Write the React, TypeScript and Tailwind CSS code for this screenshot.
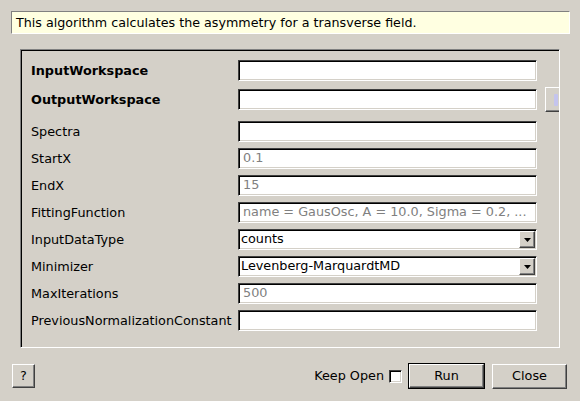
type Row = {
  label: string;
  bold?: boolean;
  kind: "text" | "combo";
  value?: string;
  placeholder?: string;
  browse?: boolean;
  h: number;
  mt: number;
};

const rows: Row[] = [
  { label: "InputWorkspace", bold: true, kind: "text", h: 21, mt: 0 },
  { label: "OutputWorkspace", bold: true, kind: "text", browse: true, h: 25, mt: 6 },
  { label: "Spectra", kind: "text", h: 21, mt: 9 },
  { label: "StartX", kind: "text", placeholder: "0.1", h: 21, mt: 6 },
  { label: "EndX", kind: "text", placeholder: "15", h: 21, mt: 6 },
  {
    label: "FittingFunction",
    kind: "text",
    placeholder: "name = GausOsc, A = 10.0, Sigma = 0.2, ...",
    h: 21,
    mt: 6,
  },
  { label: "InputDataType", kind: "combo", value: "counts", h: 21, mt: 6 },
  { label: "Minimizer", kind: "combo", value: "Levenberg-MarquardtMD", h: 21, mt: 6 },
  { label: "MaxIterations", kind: "text", placeholder: "500", h: 21, mt: 6 },
  { label: "PreviousNormalizationConstant", kind: "text", h: 21, mt: 6 },
];

const sunken =
  "border border-t-[#404040] border-l-[#404040] border-b-white border-r-white shadow-[inset_1px_1px_0_#000,inset_-1px_-1px_0_#d4d0c8]";
const raised =
  "border border-t-white border-l-white border-b-[#404040] border-r-[#404040] shadow-[inset_-1px_-1px_0_#808080]";

function Field({ row }: { row: Row }) {
  if (row.kind === "combo") {
    return (
      <div className={`w-[299px] h-[21px] shrink-0 bg-white flex items-center ${sunken}`}>
        <span className="pl-[2px] flex-1 text-black leading-none">{row.value}</span>
        <div
          className={`w-[16px] h-[17px] mr-[1px] bg-[#d4d0c8] flex items-center justify-center ${raised}`}
        >
          <svg width="7" height="4" viewBox="0 0 7 4">
            <path d="M0 0h7L3.5 4z" fill="#000" />
          </svg>
        </div>
      </div>
    );
  }
  return (
    <div className={`w-[299px] h-[21px] shrink-0 bg-white flex items-center ${sunken}`}>
      <span className="pl-[4px] text-[#808080] leading-none whitespace-nowrap">
        {row.placeholder ?? ""}
      </span>
    </div>
  );
}

export default function App() {
  return (
    <div className="w-[580px] h-[401px] bg-[#d4d0c8] overflow-hidden font-['DejaVu_Sans',sans-serif] text-[12.8px] text-black">
      {/* Description */}
      <div className="pt-[11px] pl-[11px]">
        <div className="w-[559px] h-[23px] bg-[#ffffe1] border border-t-[#808080] border-l-[#808080] border-b-white border-r-white flex items-center pl-[4px] text-[12.7px]">
          This algorithm calculates the asymmetry for a transverse field.
        </div>
      </div>

      {/* Properties frame */}
      <div className="ml-[20px] mt-[15px] w-[540px] h-[299px] border border-t-[#808080] border-l-[#808080] border-b-white border-r-white">
        <div className="w-full h-full overflow-hidden shadow-[inset_1px_1px_0_#000] pt-[10px] pl-[10px]">
          {rows.map((row) => (
            <div
              key={row.label}
              className="flex items-center"
              style={{ height: row.h, marginTop: row.mt }}
            >
              <div
                className={`w-[207px] shrink-0 whitespace-nowrap ${row.bold ? "font-bold" : ""}`}
              >
                {row.label}
              </div>
              <Field row={row} />
              {row.browse && (
                <div
                  className={`ml-[8px] w-[40px] h-[25px] shrink-0 bg-[#d4d0c8] flex items-center pl-[8px] ${raised}`}
                >
                  <div className="w-[4px] h-[12px] bg-[#c4c4ee] rounded-[1px]" />
                </div>
              )}
            </div>
          ))}
        </div>
      </div>

      {/* Bottom bar */}
      <div className="mt-[15px] pl-[12px] pr-[13px] h-[26px] flex items-center">
        <button
          className={`w-[23px] h-[24px] bg-[#d4d0c8] flex items-center justify-center ${raised}`}
        >
          ?
        </button>
        <div className="ml-auto flex items-center">
          <span>Keep Open</span>
          <div className={`ml-[5px] w-[13px] h-[13px] bg-white ${sunken}`} />
          <div className="ml-[6px] w-[77px] h-[26px] border border-black">
            <button
              className={`w-full h-full bg-[#d4d0c8] flex items-center justify-center ${raised}`}
            >
              Run
            </button>
          </div>
          <button
            className={`ml-[7px] w-[75px] h-[25px] bg-[#d4d0c8] flex items-center justify-center ${raised}`}
          >
            Close
          </button>
        </div>
      </div>
    </div>
  );
}
